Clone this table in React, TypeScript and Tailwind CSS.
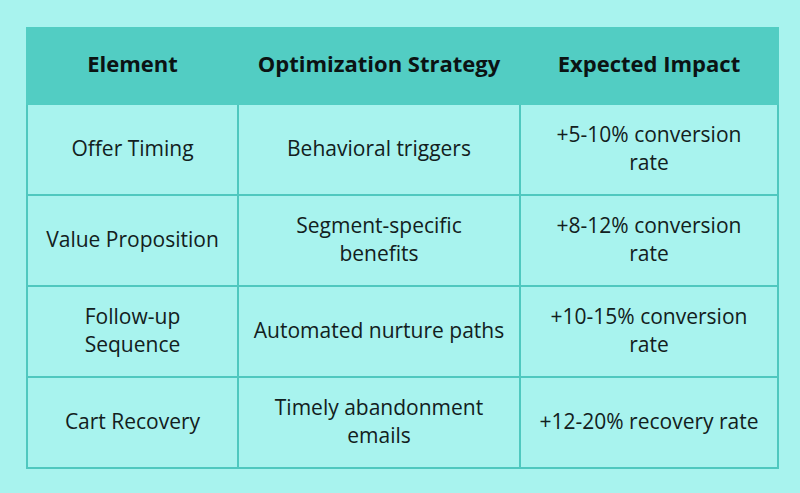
import React from "react";

const rows: string[][][] = [
  [["Offer Timing"], ["Behavioral triggers"], ["+5-10% conversion", "rate"]],
  [["Value Proposition"], ["Segment-specific", "benefits"], ["+8-12% conversion", "rate"]],
  [["Follow-up", "Sequence"], ["Automated nurture paths"], ["+10-15% conversion", "rate"]],
  [["Cart Recovery"], ["Timely abandonment", "emails"], ["+12-20% recovery rate"]],
];

export default function App() {
  return (
    <div
      className="w-[800px] h-[493px] bg-[#a8f3ee] pt-[27px] pl-[26px]"
      style={{ fontFamily: '"Open Sans", sans-serif' }}
    >
      <table className="border-collapse text-[#122020] table-fixed w-[751px]">
        <colgroup>
          <col className="w-[211px]" />
          <col className="w-[282px]" />
          <col className="w-[258px]" />
        </colgroup>
        <thead>
          <tr className="h-[76px] bg-[#52cdc3]">
            {["Element", "Optimization Strategy", "Expected Impact"].map((h) => (
              <th key={h} className="text-[22px] font-bold text-center pt-0 pb-[5px] px-0 border-2 border-[#52cdc3] text-[#0b1313] whitespace-nowrap">
                {h}
              </th>
            ))}
          </tr>
        </thead>
        <tbody>
          {rows.map((r, i) => (
            <tr key={i} className="h-[91px]">
              {r.map((c, j) => (
                <td
                  key={j}
                  className="border-2 border-[#4fc8bf] text-center text-[21px] leading-[28px] pt-0 pb-[3px] px-0 align-middle whitespace-nowrap"
                >
                  {c.map((line, k) => (
                    <div key={k}>{line}</div>
                  ))}
                </td>
              ))}
            </tr>
          ))}
        </tbody>
      </table>
    </div>
  );
}
